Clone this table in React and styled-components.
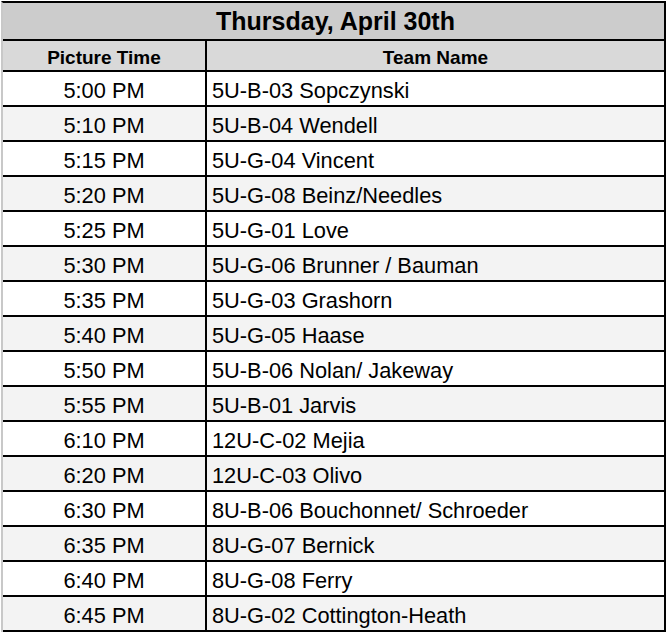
import React from 'react';
import styled, { createGlobalStyle } from 'styled-components';

const GlobalStyle = createGlobalStyle`
  html, body {
    margin: 0;
    padding: 0;
    background: #ffffff;
  }
  body {
    font-family: "Liberation Sans", Arial, sans-serif;
    color: #000000;
  }
`;

const Sheet = styled.div`
  box-sizing: border-box;
  width: 665px;
  margin: 1px 0 0 1px;
  border-left: 2px solid #c8c8c8;
  border-right: 2px solid #000000;
  border-top: 2px solid #000000;
`;

const TitleRow = styled.div`
  box-sizing: border-box;
  height: 38px;
  padding: 1px 0 0 4px;
  background: #cccccc;
  border-bottom: 2px solid #000000;
  display: flex;
  align-items: center;
  justify-content: center;
  font-weight: 700;
  font-size: 25px;
`;

const Row = styled.div`
  box-sizing: border-box;
  display: grid;
  grid-template-columns: 204px 1fr;
  height: ${props => props.$head ? '31px' : '35px'};
  background: ${props => props.$head ? '#d9d9d9' : props.$alt ? '#f3f3f3' : '#ffffff'};
  border-bottom: 2px solid #000000;
  font-size: ${props => props.$head ? '19px' : '21.8px'};
  font-weight: ${props => props.$head ? 700 : 400};
`;

const TimeCell = styled.div`
  box-sizing: border-box;
  border-right: 2px solid #000000;
  display: flex;
  align-items: center;
  justify-content: center;
  white-space: nowrap;
  padding-top: 4px;
`;

const NameCell = styled.div`
  box-sizing: border-box;
  display: flex;
  align-items: center;
  justify-content: ${props => props.$center ? 'center' : 'flex-start'};
  padding: 4px 0 0 ${props => props.$center ? '0' : '5px'};
  white-space: nowrap;
`;

const slots = [
  ['5:00 PM', '5U-B-03 Sopczynski'],
  ['5:10 PM', '5U-B-04 Wendell'],
  ['5:15 PM', '5U-G-04 Vincent'],
  ['5:20 PM', '5U-G-08 Beinz/Needles'],
  ['5:25 PM', '5U-G-01 Love'],
  ['5:30 PM', '5U-G-06 Brunner / Bauman'],
  ['5:35 PM', '5U-G-03 Grashorn'],
  ['5:40 PM', '5U-G-05 Haase'],
  ['5:50 PM', '5U-B-06 Nolan/ Jakeway'],
  ['5:55 PM', '5U-B-01 Jarvis'],
  ['6:10 PM', '12U-C-02 Mejia'],
  ['6:20 PM', '12U-C-03 Olivo'],
  ['6:30 PM', '8U-B-06 Bouchonnet/ Schroeder'],
  ['6:35 PM', '8U-G-07 Bernick'],
  ['6:40 PM', '8U-G-08 Ferry'],
  ['6:45 PM', '8U-G-02 Cottington-Heath'],
];

const App = () => {
  return (
    <>
      <GlobalStyle />
      <Sheet>
        <TitleRow>Thursday, April 30th</TitleRow>
        <Row $head>
          <TimeCell>Picture Time</TimeCell>
          <NameCell $center>Team Name</NameCell>
        </Row>
        {slots.map(([time, team], i) => (
          <Row key={time} $alt={i % 2 === 1}>
            <TimeCell>{time}</TimeCell>
            <NameCell>{team}</NameCell>
          </Row>
        ))}
      </Sheet>
    </>
  );
};

export default App;
